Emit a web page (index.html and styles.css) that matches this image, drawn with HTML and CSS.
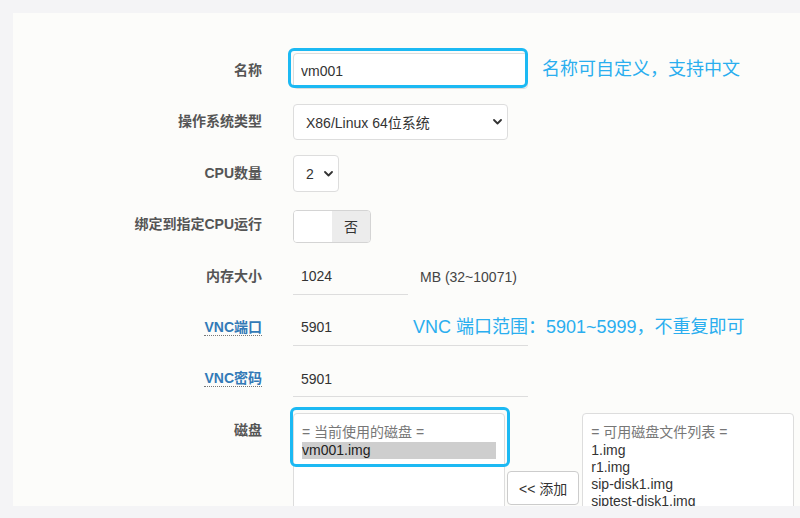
FILE: index.html
```html
<!DOCTYPE html>
<html lang="zh-CN">
<head>
  <meta charset="UTF-8">
  <meta name="viewport" content="width=device-width, initial-scale=1.0">
  <title>新建虚拟机</title>
  <link rel="stylesheet" href="styles.css">
</head>
<body>

  <div class="panel">
    <form class="vm-form">

      <label class="form-label">名称</label>
      <div class="form-field">
        <div class="mark-wrap">
          <input type="text" class="text-input name-input" value="vm001">
          <span class="mark-box"></span>
        </div>
        <span class="note name-note">名称可自定义，支持中文</span>
      </div>

      <label class="form-label">操作系统类型</label>
      <div class="form-field">
        <div class="select os-select">
          <span>X86/Linux 64位系统</span>
          <svg class="chevron" width="9" height="6" viewBox="0 0 9 6"><polyline points="1,1 4.5,4.5 8,1" fill="none" stroke="#333" stroke-width="1.8" stroke-linecap="round" stroke-linejoin="round"/></svg>
        </div>
      </div>

      <label class="form-label">CPU数量</label>
      <div class="form-field">
        <div class="select cpu-select">
          <span>2</span>
          <svg class="chevron" width="9" height="6" viewBox="0 0 9 6"><polyline points="1,1 4.5,4.5 8,1" fill="none" stroke="#333" stroke-width="1.8" stroke-linecap="round" stroke-linejoin="round"/></svg>
        </div>
      </div>

      <label class="form-label">绑定到指定CPU运行</label>
      <div class="form-field">
        <div class="switch">
          <span class="switch-handle"></span>
          <span class="switch-off">否</span>
        </div>
      </div>

      <label class="form-label">内存大小</label>
      <div class="form-field">
        <input type="text" class="line-input mem-input" value="1024">
        <span class="unit">MB (32~10071)</span>
      </div>

      <label class="form-label"><abbr title="VNC端口">VNC端口</abbr></label>
      <div class="form-field">
        <div class="mark-wrap">
          <input type="text" class="line-input vnc-input" value="5901">
          <span class="note vnc-note">VNC 端口范围：5901~5999，不重复即可</span>
        </div>
      </div>

      <label class="form-label"><abbr title="VNC密码">VNC密码</abbr></label>
      <div class="form-field">
        <input type="text" class="line-input vnc-input" value="5901">
      </div>

      <label class="form-label">磁盘</label>
      <div class="form-field disk-field">
        <div class="disk-list current-list">
          <div class="list-head">= 当前使用的磁盘 =</div>
          <div class="list-item selected">vm001.img</div>
          <span class="mark-box disk-mark"></span>
        </div>
        <button type="button" class="add-btn">&lt;&lt; 添加</button>
        <div class="disk-list">
          <div class="list-head">= 可用磁盘文件列表 =</div>
          <div class="list-item">1.img</div>
          <div class="list-item">r1.img</div>
          <div class="list-item">sip-disk1.img</div>
          <div class="list-item">siptest-disk1.img</div>
        </div>
      </div>

    </form>
  </div>

</body>
</html>
```

FILE: styles.css
```css
body {
  margin: 0;
  padding: 13px 0 0 13px;
  background: #f4f4f6;
  font-family: 'Liberation Sans', 'Noto Sans CJK SC', sans-serif;
  font-size: 14px;
  color: #333;
  overflow: hidden;
}
.panel {
  background: #fcfcfa;
  height: 493px;
  overflow: hidden;
}
.vm-form {
  display: grid;
  grid-template-columns: 249px 1fr;
  column-gap: 31px;
  row-gap: 15.4px;
  padding-top: 40px;
}
.form-label {
  padding-top: 7px;
  line-height: 20px;
  text-align: right;
  font-weight: 700;
  color: #555;
}
.form-label abbr {
  color: #337ab7;
  text-decoration: none;
  border-bottom: 1px dotted #777;
}
.form-field {
  display: flex;
  align-items: center;
  height: 36px;
}
.mark-wrap {
  position: relative;
}
.mark-box {
  position: absolute;
  top: -5px;
  left: -5px;
  width: 240px;
  height: 40px;
  box-sizing: border-box;
  border: 3px solid #1cb9f3;
  border-radius: 6px;
}
.note {
  font-size: 18px;
  color: #2aaeef;
  white-space: nowrap;
}
.name-note {
  margin: 0 0 8px 14px;
}
.vnc-note {
  position: absolute;
  top: 0;
  left: 120px;
  line-height: 34px;
}
.text-input {
  box-sizing: border-box;
  width: 235px;
  height: 36px;
  padding: 0 7px;
  border: 1px solid #ddd;
  border-radius: 4px;
  background: #fff;
  font: inherit;
  color: #333;
}
.select {
  box-sizing: border-box;
  display: flex;
  justify-content: space-between;
  align-items: center;
  height: 36px;
  padding: 0 5px 0 12px;
  border: 1px solid #ddd;
  border-radius: 4px;
  background: #fff;
}
.os-select {
  width: 215px;
}
.cpu-select {
  width: 46px;
  height: 37px;
}
.switch {
  display: flex;
  width: 78px;
  height: 33px;
  box-sizing: border-box;
  border: 1px solid #d4d4d4;
  border-radius: 4px;
  overflow: hidden;
  margin-top: 2px;
}
.switch-handle {
  width: 38px;
  background: #fff;
}
.switch-off {
  flex: 1;
  display: flex;
  justify-content: center;
  align-items: center;
  background: #ececec;
  color: #333;
}
.line-input {
  box-sizing: border-box;
  height: 36px;
  padding: 0 8px;
  border: none;
  border-bottom: 1px solid #ddd;
  background: transparent;
  font: inherit;
  color: #333;
}
.mem-input {
  width: 115px;
}
.vnc-input {
  width: 235px;
}
.unit {
  margin-left: 12px;
  color: #444;
}
.disk-field {
  align-items: flex-start;
  height: auto;
}
.disk-list {
  position: relative;
  box-sizing: border-box;
  width: 212px;
  height: 150px;
  padding: 9px 8px;
  border: 1px solid #ddd;
  border-radius: 4px;
  background: #fff;
}
.list-head {
  line-height: 19px;
  color: #777;
}
.list-item {
  line-height: 17px;
  color: #333;
}
.list-item.selected {
  background: #cecece;
  color: #222;
}
.disk-mark {
  top: -7px;
  left: -4px;
  width: 220px;
  height: 60px;
}
.add-btn {
  height: 34px;
  margin: 58px 3px 0 2px;
  padding: 0 11px;
  border: 1px solid #ccc;
  border-radius: 4px;
  background: #fff;
  font: inherit;
  color: #333;
}
```
